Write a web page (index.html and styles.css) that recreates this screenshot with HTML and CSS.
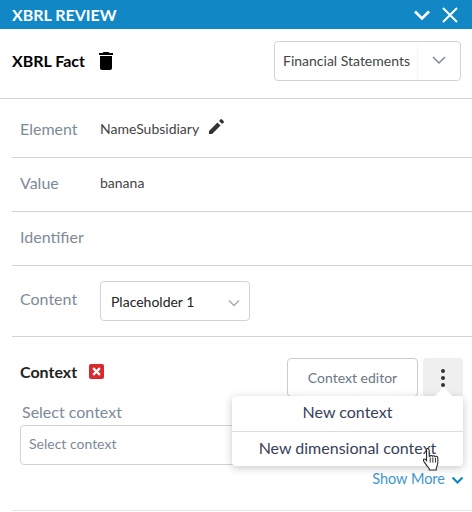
FILE: index.html
```html
<!DOCTYPE html>
<html lang="en">
<head>
<meta charset="utf-8">
<title>XBRL Review</title>
<link rel="stylesheet" href="styles.css">
</head>
<body>
<div class="panel">
  <header class="titlebar">
    <span class="title">XBRL REVIEW</span>
    <span class="title-actions">
      <svg class="ti" width="18" height="12" viewBox="0 0 18 12"><path d="M2 2.500 9 9.500 16 2.500" fill="none" stroke="#fff" stroke-width="2.600"/></svg>
      <svg class="ti" width="16" height="16" viewBox="0 0 16 16"><path d="M1 1 15 15M15 1 1 15" fill="none" stroke="#fff" stroke-width="2"/></svg>
    </span>
  </header>
  <section class="fact-row">
    <div class="fact-left">
      <span class="fact-title">XBRL Fact</span>
      <svg width="14" height="18" viewBox="0 0 14 18"><path d="M4.500 0h5l1 1H14v2H0V1h3.500zM1 4h12v12a2 2 0 0 1-2 2H3a2 2 0 0 1-2-2z" fill="#000"/></svg>
    </div>
    <div class="fs-select">
      <span class="fs-text">Financial Statements</span>
      <span class="fs-caret"><svg width="14" height="9" viewBox="0 0 14 9"><path d="M1 1 7 7 13 1" fill="none" stroke="#7d8a99" stroke-width="1.500"/></svg></span>
    </div>
  </section>
  <div class="row r54 first">
    <span class="label">Element</span>
    <span class="value">NameSubsidiary</span>
    <svg class="pencil" width="15" height="15" viewBox="0 0 16 16"><path d="M0 12.700V16h3.300l9-9L9 3.700zM15.700 3.600a.9.900 0 0 0 0-1.200L13.600.3a.9.900 0 0 0-1.200 0L10.700 2 14 5.300z" fill="#333"/></svg>
  </div>
  <div class="row r54">
    <span class="label">Value</span>
    <span class="value">banana</span>
  </div>
  <div class="row r54">
    <span class="label">Identifier</span>
  </div>
  <div class="row r71">
    <span class="label lift">Content</span>
    <div class="ph-select">
      <span>Placeholder 1</span>
      <svg width="12" height="8" viewBox="0 0 12 8"><path d="M1 1.500 6 6.500 11 1.500" fill="none" stroke="#a5adb6" stroke-width="1.500"/></svg>
    </div>
  </div>
  <section class="context">
    <div class="ctx-head">
      <div class="ctx-left">
        <span class="ctx-title">Context</span>
        <span class="badge"><svg width="9" height="9" viewBox="0 0 8 8"><path d="M1 1 7 7M7 1 1 7" fill="none" stroke="#fff" stroke-width="2"/></svg></span>
      </div>
      <div class="ctx-actions">
        <button class="editor-btn">Context editor</button>
        <button class="dots-btn"><i></i><i></i><i></i></button>
      </div>
    </div>
    <div class="sel-label">Select context</div>
    <div class="sel-input">Select context</div>
    <div class="show-more">
      <span>Show More</span>
      <svg width="13" height="9" viewBox="0 0 13 9"><path d="M1.500 1.500 6.500 6.500 11.500 1.500" fill="none" stroke="#1287c6" stroke-width="2.200"/></svg>
    </div>
    <div class="menu">
      <div class="menu-arrow"></div>
      <div class="menu-item">New context</div>
      <div class="menu-item sep">New dimensional context</div>
    </div>
    <svg class="cursor" width="18" height="23" viewBox="0.500 1 15.500 22"><path d="M5 1.500c1 0 1.500.7 1.500 1.700V9l.6-.1c.5-1 2-1 2.500 0 .6-.8 2-.7 2.400.3.700-.6 2.400-.3 2.700 1 .3 2 .3 4.500-.2 6.500-.3 1.300-.8 2.300-1.200 3.300v2H6.500v-1.500C5 19 3.800 17.500 2.500 15.500 2 14.700 1 13.500 1 12.500c0-1 1.300-1.300 2-.7l1 1.200V3.200c0-1 .300-1.700 1-1.700z" fill="#fff" stroke="#222" stroke-width="1"/><path d="M7.500 10v5M10 10v5M12.500 10.500V15" stroke="#222" stroke-width=".9"/></svg>
  </section>
</div>
</body>
</html>
```
FILE: styles.css
```css
* { box-sizing: border-box; }
html, body { margin: 0; padding: 0; }
body { width: 472px; height: 512px; overflow: hidden; background: #fff; font-family: Lato, sans-serif; }
.panel { width: 472px; height: 512px; display: flex; flex-direction: column; }
.titlebar { height: 29px; background: #1287c6; color: #fff; display: flex; align-items: center; padding: 0 14px 0 12px; justify-content: space-between; flex: none; }
.title { font-size: 16px; font-weight: 700; }
.title-actions { display: flex; align-items: center; gap: 11px; }
.fact-row { height: 70px; flex: none; display: flex; align-items: center; justify-content: space-between; padding: 0 11px 6px 12px; border-bottom: 1px solid #d4d4d4; }
.fact-left { display: flex; align-items: center; gap: 14px; }
.fact-title { font-size: 16px; font-weight: 700; color: #000; }
.fs-select { width: 187px; height: 40px; border: 1px solid #ced4da; border-radius: 4px; display: flex; align-items: center; }
.fs-text { flex: 1; padding-left: 8px; font-size: 14px; color: #444; }
.fs-caret { width: 42px; height: 100%; display: flex; align-items: center; justify-content: center; padding-right: 1px; box-shadow: -1px 0 0 #f6f6f6; }
.row { flex: none; margin-left: 12px; padding: 0 0 5px 8px; display: flex; align-items: center; border-bottom: 1px solid #d4d4d4; }
.r54 { height: 54px; }
.first { height: 59px; padding-top: 3px; padding-bottom: 2px; }
.r71 { height: 71px; padding-bottom: 0; }
.label { width: 80px; font-size: 16px; color: #7d8a99; }
.lift { margin-top: -5px; }
.value { font-size: 14px; color: #444; }
.pencil { margin-left: 10px; margin-top: -4px; }
.ph-select { width: 150px; height: 40px; border: 1px solid #ced4da; border-radius: 4px; display: flex; align-items: center; justify-content: space-between; padding: 0 9px 0 10px; font-size: 14px; color: #222; }
.ph-select svg { margin-top: 4px; }
.context { position: relative; flex: 1; margin-left: 12px; padding: 21px 9px 0 8px; border-bottom: 1px solid #e4e4e4; margin-bottom: 1px; }
.ctx-head { display: flex; justify-content: space-between; align-items: center; height: 39px; }
.ctx-left { display: flex; align-items: center; gap: 12px; margin-top: -12px; }
.ctx-title { font-size: 16px; font-weight: 700; color: #222; }
.badge { width: 15px; height: 15px; border-radius: 2px; background: #d9292f; display: flex; align-items: center; justify-content: center; }
.ctx-actions { display: flex; gap: 5px; }
.editor-btn { width: 131px; height: 39px; background: #fff; border: 1px solid #ccc; border-radius: 4px; font: 14px Lato, sans-serif; color: #6b7885; padding: 0; }
.dots-btn { width: 40px; height: 39px; background: #efefef; border: 0; border-radius: 4px; display: flex; flex-direction: column; align-items: center; justify-content: center; gap: 3px; padding: 0; }
.dots-btn i { width: 4px; height: 4px; border-radius: 50%; background: #333; }
.sel-label { margin-top: 5px; font-size: 16px; color: #7d8a99; line-height: 20px; margin-left: 2px; }
.sel-input { margin-top: 3px; height: 40px; border: 1px solid #ced4da; border-radius: 4px; padding: 0 0 4px 8px; display: flex; align-items: center; font-size: 14px; color: #7d8a99; }
.show-more { margin-top: 5px; display: flex; justify-content: flex-end; align-items: center; gap: 6px; margin-right: -1px; font-size: 14.500px; color: #3e97cf; }
.show-more svg { margin-top: 3px; }
.menu { position: absolute; left: 220px; top: 59px; width: 231px; height: 70px; background: #fff; border-radius: 4px; box-shadow: 0 2px 8px rgba(0,0,0,.22); font-size: 16px; color: #37415a; z-index: 2; }
.menu-arrow { position: absolute; right: 13px; top: -6px; width: 13px; height: 13px; background: #fff; transform: rotate(45deg); }
.menu-item { position: relative; height: 35px; display: flex; align-items: center; justify-content: center; padding-bottom: 4px; }
.sep { border-top: 1px solid #ddd; }
.cursor { position: absolute; left: 410px; top: 111px; z-index: 3; }
```
